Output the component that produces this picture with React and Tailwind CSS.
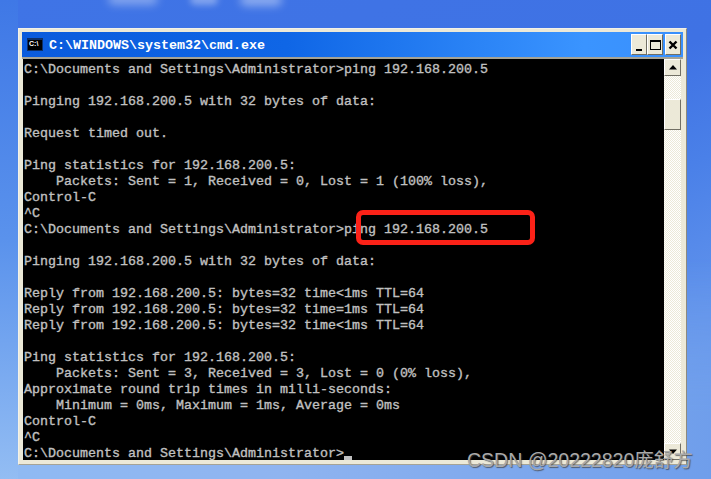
const lines = [
  "C:\\Documents and Settings\\Administrator>ping 192.168.200.5",
  "",
  "Pinging 192.168.200.5 with 32 bytes of data:",
  "",
  "Request timed out.",
  "",
  "Ping statistics for 192.168.200.5:",
  "    Packets: Sent = 1, Received = 0, Lost = 1 (100% loss),",
  "Control-C",
  "^C",
  "C:\\Documents and Settings\\Administrator>ping 192.168.200.5",
  "",
  "Pinging 192.168.200.5 with 32 bytes of data:",
  "",
  "Reply from 192.168.200.5: bytes=32 time<1ms TTL=64",
  "Reply from 192.168.200.5: bytes=32 time=1ms TTL=64",
  "Reply from 192.168.200.5: bytes=32 time<1ms TTL=64",
  "",
  "Ping statistics for 192.168.200.5:",
  "    Packets: Sent = 3, Received = 3, Lost = 0 (0% loss),",
  "Approximate round trip times in milli-seconds:",
  "    Minimum = 0ms, Maximum = 1ms, Average = 0ms",
  "Control-C",
  "^C",
];

const bevel =
  "bg-[#ece9d8] border border-t-white border-l-white border-r-[#716f64] border-b-[#716f64]";

function CaptionButton({ children, className = "" }) {
  return (
    <div className={`w-[16px] h-[21px] flex items-center justify-center ${bevel} ${className}`}>
      {children}
    </div>
  );
}

function CmdIcon() {
  return (
    <div className="w-[16px] h-[13px] bg-[#0d2f66] p-[1px] pt-[2px]">
      <div className="w-full h-full bg-black text-white text-[7px] leading-[8px] font-bold font-['Liberation_Sans',sans-serif] pl-[1px]">
        C:\
      </div>
    </div>
  );
}

function Scrollbar() {
  return (
    <div className="w-[17px] h-full flex flex-col bg-[repeating-conic-gradient(#ece9d8_0_25%,#ffffff_0_50%)] bg-[length:2px_2px]">
      <div className={`h-[17px] flex items-center justify-center ${bevel}`}>
        <svg width="8" height="5" viewBox="0 0 8 5">
          <path d="M4 0 L8 4.5 L0 4.5 Z" fill="#000" />
        </svg>
      </div>
      <div className="h-[23px]" />
      <div className={`h-[31px] ${bevel}`} />
      <div className="flex-1" />
      <div className={`h-[17px] flex items-center justify-center ${bevel}`}>
        <svg width="8" height="5" viewBox="0 0 8 5">
          <path d="M4 5 L8 0.5 L0 0.5 Z" fill="#000" />
        </svg>
      </div>
    </div>
  );
}

function Clouds() {
  return (
    <div className="absolute top-0 left-0 w-full h-[24px] overflow-hidden">
      <div className="absolute left-[108px] top-[-7px] w-[50px] h-[12px] rounded-full bg-white/35 blur-[4px]" />
      <div className="absolute left-[190px] top-[-6px] w-[28px] h-[11px] rounded-full bg-white/35 blur-[3px]" />
      <div className="absolute left-[240px] top-[-6px] w-[42px] h-[12px] rounded-full bg-white/40 blur-[4px]" />
    </div>
  );
}

export default function App() {
  return (
    <div className="relative w-[711px] h-[479px] overflow-hidden bg-[linear-gradient(155deg,#3f74e6_0%,#3f72e4_45%,#4a80e8_60%,#7aa8f0_100%)] pt-[28px] pl-[18px]">
      <div className="absolute inset-x-0 bottom-0 h-[220px] bg-[linear-gradient(90deg,#8fbaf3_0%,#8fb4f0_40%,#6f9eeb_100%)] [mask-image:linear-gradient(to_top,black_30%,transparent)]" />
      <div className="absolute left-0 top-0 w-[18px] h-full bg-[linear-gradient(to_bottom,#3f78e6,#5a92ec_50%,#93bdf3)]" />
      <Clouds />

      <div className="relative w-[669px] h-[437px] bg-[#ece9d8] border border-t-[#f4f2e8] border-l-[#f4f2e8] border-r-[#8c8a7e] border-b-[#a5a396] pt-[3px] pl-[3px] pr-[2px]">
        <div className="w-[661px] h-[25px] flex items-center bg-[linear-gradient(90deg,#0a5bdc_0%,#0f66e6_40%,#3a94ff_85%,#3a90fc_100%)] pl-[5px] pr-[2px]">
          <CmdIcon />
          <span className="ml-[6px] mt-[2px] text-white font-bold text-[13.33px] font-['Liberation_Mono',monospace] whitespace-pre">
            C:\WINDOWS\system32\cmd.exe
          </span>
          <div className="ml-auto flex">
            <CaptionButton>
              <div className="w-[6px] h-[2px] bg-black mt-[10px] mr-[1px]" />
            </CaptionButton>
            <CaptionButton>
              <div className="w-[11px] h-[10px] border border-black border-t-2" />
            </CaptionButton>
            <CaptionButton className="ml-[2px]">
              <svg width="10" height="10" viewBox="0 0 10 10">
                <path d="M1.5 1.5 L8.5 8.5 M8.5 1.5 L1.5 8.5" stroke="#000" strokeWidth="2.4" />
              </svg>
            </CaptionButton>
          </div>
        </div>
        <div className="h-[2px] w-[661px] bg-[#a5a396]" />

        <div className="flex h-[401px] pl-[1px] pr-[2px]">
          <div className="w-[641px] h-full bg-black pl-[1px] pt-[3px] font-['Liberation_Mono',monospace] text-[13.33px] leading-[16px] text-[#c0c0c0] [-webkit-text-stroke:0.35px_#c0c0c0] whitespace-pre overflow-hidden">
            {lines.map((line, i) => (
              <div key={i} className="h-[16px]">
                {line}
              </div>
            ))}
            <div className="relative h-[16px]">
              C:\Documents and Settings\Administrator&gt;
              <span className="inline-block w-[8px] h-[4px] bg-[#c0c0c0] align-[-3px]" />
            </div>
          </div>
          <Scrollbar />
        </div>
      </div>

      <div className="absolute left-[356px] top-[210px] w-[179px] h-[35px] border-[5px] border-[#fb2218] rounded-[7px]" />

      <div className="absolute left-[467px] top-[449px] text-[19.5px] leading-[22px] whitespace-pre text-[#a9a9a9] [text-shadow:1px_1px_1px_rgba(60,60,60,0.7)] font-['Liberation_Sans','Noto_Sans_CJK_SC',sans-serif]">
        CSDN @20222820庞舒方
      </div>
    </div>
  );
}
